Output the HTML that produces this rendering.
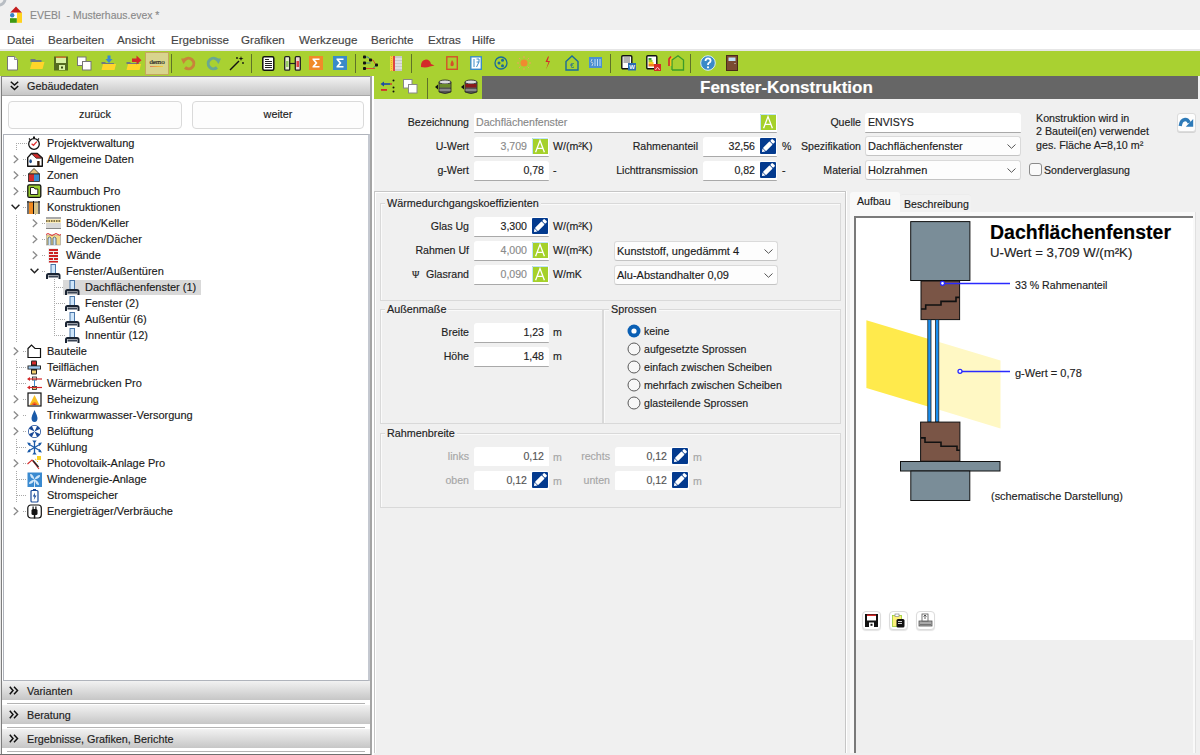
<!DOCTYPE html>
<html><head><meta charset="utf-8">
<style>
*{box-sizing:border-box;margin:0;padding:0}
html,body{width:1200px;height:755px;overflow:hidden;background:#f0f0f0;font-family:"Liberation Sans",sans-serif;font-size:11px;color:#1a1a1a}
div{-webkit-text-stroke:0.15px currentColor}
.a{position:absolute}
svg{position:absolute;overflow:visible}
#titlebar{left:0;top:0;width:1200px;height:30px;background:#f0f0f0}
#menubar{left:0;top:30px;width:1200px;height:19px;background:#fff}
#menusep{left:0;top:49px;width:1200px;height:2px;background:#e6e6e6}
#toolbar{left:0;top:51px;width:1200px;height:25px;background:#a9d131}
.menu{position:absolute;top:33px;font-size:11.6px;color:#444;letter-spacing:0}
.tsep{position:absolute;top:55px;width:1px;height:18px;background:#6b7d2a}
#left{left:0;top:76px;width:372px;height:679px;background:#fff}
.hdr{position:absolute;left:2px;width:368px;background:linear-gradient(#f2f2f2,#dcdcdc 50%,#c6c6c6)}
.btn{position:absolute;height:28px;border:1.3px solid #dadada;border-radius:4px;background:#fdfdfd;text-align:center;line-height:24px;font-size:10.8px;color:#222}
.tr{position:absolute;font-size:11px;color:#1a1a1a;white-space:nowrap}
.lbl{position:absolute;font-size:10.6px;color:#222;white-space:nowrap;text-align:right}
.inp{position:absolute;height:20px;background:#fff;border-bottom:2px solid #a8a8a8;border-radius:2px 2px 0 0}
.val{position:absolute;font-size:10.6px;white-space:nowrap}
</style></head><body>
<div id="titlebar" class="a"></div>
<div id="menubar" class="a"></div>
<div id="menusep" class="a"></div>
<div id="toolbar" class="a"></div>

<!-- title -->
<svg style="left:10px;top:6px" width="12" height="17" viewBox="0 0 12 17">
<polygon points="6,0.4 12,6.7 0,6.7" fill="#c41e1e"/>
<rect x="0" y="6.7" width="6.8" height="5.5" fill="#fff"/>
<circle cx="2.2" cy="9.3" r="2.2" fill="#3a82c4"/>
<rect x="0" y="12.2" width="6.8" height="4.6" fill="#3f9a12"/>
<rect x="7" y="6.7" width="5" height="10.1" fill="#ffd21e"/>
</svg>
<svg style="left:0;top:0" width="8" height="8"><circle cx="-1" cy="-1" r="6" fill="none" stroke="#9aa2aa" stroke-width="3" opacity="0.65"/></svg>
<div class="a" style="left:29.5px;top:8px;font-size:11.8px;color:#8a8a8a;transform:scaleX(0.885);transform-origin:0 0;white-space:nowrap">EVEBI&nbsp; - Musterhaus.evex *</div>

<!-- menu -->
<div class="menu" style="left:7px">Datei</div>
<div class="menu" style="left:48px">Bearbeiten</div>
<div class="menu" style="left:117px">Ansicht</div>
<div class="menu" style="left:171px">Ergebnisse</div>
<div class="menu" style="left:241px">Grafiken</div>
<div class="menu" style="left:299px">Werkzeuge</div>
<div class="menu" style="left:371px">Berichte</div>
<div class="menu" style="left:428px">Extras</div>
<div class="menu" style="left:472px">Hilfe</div>

<!-- LEFT PANEL -->
<div id="left" class="a"></div>
<div class="a" style="left:0;top:76px;width:1px;height:679px;background:#e6e6e6"></div><div class="a" style="left:1px;top:76px;width:1px;height:679px;background:#7e7e7e"></div>
<div class="a" style="left:370px;top:76px;width:2px;height:679px;background:#a4a4a4"></div>
<div class="hdr" style="top:76px;height:20px;border-top:1px solid #8a8a8a;border-bottom:1px solid #a8a8a8"></div>
<svg style="left:10px;top:81px" width="9" height="10"><polyline points="0.8,0.8 4.5,4 8.2,0.8" fill="none" stroke="#111" stroke-width="1.5"/><polyline points="0.8,5 4.5,8.5 8.2,5" fill="none" stroke="#111" stroke-width="1.5"/></svg>
<div class="tr" style="left:27px;top:80px;font-size:10.8px;color:#222">Gebäudedaten</div>
<div class="btn" style="left:8px;top:101px;width:174px">zurück</div>
<div class="btn" style="left:192px;top:101px;width:172px">weiter</div>
<div class="a" style="left:3px;top:134px;width:367px;height:547px;border:1px solid #b0b4bc;border-right:2px solid #c4c8d0;background:#fff"></div>

<div class="hdr" style="top:681px;height:19px"></div>
<div class="a" style="left:7px;top:703px;width:358px;height:1px;background:#b4b4b4"></div>
<div class="hdr" style="top:705px;height:19px"></div>
<div class="a" style="left:7px;top:727px;width:358px;height:1px;background:#b4b4b4"></div>
<div class="hdr" style="top:729px;height:19px"></div>
<div class="a" style="left:7px;top:751px;width:358px;height:1px;background:#b4b4b4"></div>
<div class="tr" style="left:27px;top:685px;font-size:10.8px;color:#222">Varianten</div>
<div class="tr" style="left:27px;top:709px;font-size:10.8px;color:#222">Beratung</div>
<div class="tr" style="left:27px;top:733px;font-size:10.8px;color:#222">Ergebnisse, Grafiken, Berichte</div>

<svg style="left:9px;top:686px" width="10" height="9"><polyline points="0.8,0.8 4,4.5 0.8,8.2" fill="none" stroke="#111" stroke-width="1.5"/><polyline points="5,0.8 8.5,4.5 5,8.2" fill="none" stroke="#111" stroke-width="1.5"/></svg>
<svg style="left:9px;top:710px" width="10" height="9"><polyline points="0.8,0.8 4,4.5 0.8,8.2" fill="none" stroke="#111" stroke-width="1.5"/><polyline points="5,0.8 8.5,4.5 5,8.2" fill="none" stroke="#111" stroke-width="1.5"/></svg>
<svg style="left:9px;top:734px" width="10" height="9"><polyline points="0.8,0.8 4,4.5 0.8,8.2" fill="none" stroke="#111" stroke-width="1.5"/><polyline points="5,0.8 8.5,4.5 5,8.2" fill="none" stroke="#111" stroke-width="1.5"/></svg>
<svg style="left:0;top:0" width="120" height="520"><g stroke="#a8a8a8" stroke-width="1" stroke-dasharray="1,1"><line x1="16.5" y1="143" x2="16.5" y2="511"/><line x1="16" y1="143.5" x2="27" y2="143.5"/><line x1="23" y1="159.5" x2="27" y2="159.5"/><line x1="23" y1="175.5" x2="27" y2="175.5"/><line x1="23" y1="191.5" x2="27" y2="191.5"/><line x1="23" y1="207.5" x2="27" y2="207.5"/><line x1="23" y1="351.5" x2="27" y2="351.5"/><line x1="17" y1="367.5" x2="27" y2="367.5"/><line x1="17" y1="383.5" x2="27" y2="383.5"/><line x1="23" y1="399.5" x2="27" y2="399.5"/><line x1="23" y1="415.5" x2="27" y2="415.5"/><line x1="23" y1="431.5" x2="27" y2="431.5"/><line x1="17" y1="447.5" x2="27" y2="447.5"/><line x1="23" y1="463.5" x2="27" y2="463.5"/><line x1="17" y1="479.5" x2="27" y2="479.5"/><line x1="17" y1="495.5" x2="27" y2="495.5"/><line x1="23" y1="511.5" x2="27" y2="511.5"/><line x1="35.5" y1="214" x2="35.5" y2="271"/><line x1="42" y1="223.5" x2="46" y2="223.5"/><line x1="42" y1="239.5" x2="46" y2="239.5"/><line x1="42" y1="255.5" x2="46" y2="255.5"/><line x1="42" y1="271.5" x2="46" y2="271.5"/><line x1="54.5" y1="279" x2="54.5" y2="335"/><line x1="54" y1="287.5" x2="65" y2="287.5"/><line x1="54" y1="303.5" x2="65" y2="303.5"/><line x1="54" y1="319.5" x2="65" y2="319.5"/><line x1="54" y1="335.5" x2="65" y2="335.5"/></g></svg>
<div class="a" style="left:63px;top:280px;width:138px;height:15px;background:#d9d9d9"></div>
<svg style="left:27px;top:136px" width="15" height="15" viewBox="0 0 15 15"><circle cx="7" cy="8" r="5.3" fill="#fff" stroke="#111" stroke-width="1.3"/><rect x="6" y="0.5" width="2" height="2" fill="#111"/><line x1="2" y1="2.5" x2="3.2" y2="3.7" stroke="#111" stroke-width="1.2"/><line x1="12" y1="2.5" x2="10.8" y2="3.7" stroke="#111" stroke-width="1.2"/><polyline points="4.6,7.8 6.5,9.3 9.8,5.6" fill="none" stroke="#e03030" stroke-width="1.3"/></svg>
<div class="tr" style="left:47px;top:137px">Projektverwaltung</div>
<div class="a" style="left:10px;top:151px;width:12px;height:16px;background:#fff"></div>
<svg style="left:13px;top:155px" width="7" height="9"><polyline points="0.8,0.6 4.8,4.3 0.8,8" fill="none" stroke="#8a8a8a" stroke-width="1.3"/></svg>
<svg style="left:27px;top:152px" width="15" height="15" viewBox="0 0 15 15"><path d="M0.7,14.2 V5.6 L4.4,1.5 H10.3 L15.3,6 V14.2 Z" fill="#fff" stroke="#111" stroke-width="1.4" stroke-linejoin="round"/><polygon points="4.6,1.8 10.2,1.8 14.6,6.2 9.2,6.2" fill="#d42a2a" stroke="#222" stroke-width="0.8"/><ellipse cx="3.6" cy="9.2" rx="1.3" ry="2" fill="#1a4a88"/><rect x="10.2" y="9" width="2.4" height="5" fill="#3a2010"/></svg>
<div class="tr" style="left:47px;top:153px">Allgemeine Daten</div>
<div class="a" style="left:10px;top:167px;width:12px;height:16px;background:#fff"></div>
<svg style="left:13px;top:171px" width="7" height="9"><polyline points="0.8,0.6 4.8,4.3 0.8,8" fill="none" stroke="#8a8a8a" stroke-width="1.3"/></svg>
<svg style="left:27px;top:168px" width="15" height="15" viewBox="0 0 15 15"><polygon points="1.5,6 7,0.5 12.5,6" fill="#e8c27a" stroke="#222" stroke-width="0.8"/><rect x="1.5" y="6" width="5.5" height="7.5" fill="#d42a2a"/><rect x="7" y="6" width="5.5" height="7.5" fill="#3a8ad0"/><rect x="1.5" y="6" width="11" height="7.5" fill="none" stroke="#222" stroke-width="0.8"/></svg>
<div class="tr" style="left:47px;top:169px">Zonen</div>
<div class="a" style="left:10px;top:183px;width:12px;height:16px;background:#fff"></div>
<svg style="left:13px;top:187px" width="7" height="9"><polyline points="0.8,0.6 4.8,4.3 0.8,8" fill="none" stroke="#8a8a8a" stroke-width="1.3"/></svg>
<svg style="left:27px;top:184px" width="15" height="15" viewBox="0 0 15 15"><rect x="0.8" y="0.8" width="13" height="12.6" rx="1.5" fill="#9acd32" stroke="#111" stroke-width="1.3"/><polygon points="3.5,3.5 7,3.5 8,5 10.8,5 10.8,10.5 3.5,10.5" fill="#fff" stroke="#111" stroke-width="0.9"/></svg>
<div class="tr" style="left:47px;top:185px">Raumbuch Pro</div>
<div class="a" style="left:10px;top:199px;width:12px;height:16px;background:#fff"></div>
<svg style="left:11px;top:204px" width="10" height="7"><polyline points="0.6,0.8 4.5,4.8 8.4,0.8" fill="none" stroke="#222" stroke-width="1.5"/></svg>
<svg style="left:27px;top:200px" width="15" height="15" viewBox="0 0 15 15"><rect x="1" y="1" width="12" height="13" fill="#fff"/><rect x="2" y="2" width="4" height="12" fill="#f08a20"/><rect x="7" y="2" width="4" height="12" fill="#d8c48a"/><line x1="1" y1="1" x2="1" y2="14" stroke="#111" stroke-width="1.2"/><line x1="6.5" y1="1" x2="6.5" y2="14" stroke="#111" stroke-width="1"/><line x1="12" y1="1" x2="12" y2="14" stroke="#111" stroke-width="1.2"/><line x1="0" y1="2" x2="13" y2="2" stroke="#111" stroke-width="0.8"/></svg>
<div class="tr" style="left:47px;top:201px">Konstruktionen</div>
<div class="a" style="left:29px;top:215px;width:12px;height:16px;background:#fff"></div>
<svg style="left:32px;top:219px" width="7" height="9"><polyline points="0.8,0.6 4.8,4.3 0.8,8" fill="none" stroke="#8a8a8a" stroke-width="1.3"/></svg>
<svg style="left:46px;top:216px" width="15" height="15" viewBox="0 0 15 15"><rect x="0" y="1" width="15" height="2" fill="#aaa"/><rect x="0" y="3.5" width="15" height="3" fill="#f2d98a"/><line x1="0" y1="5" x2="15" y2="5" stroke="#111" stroke-width="1.2" stroke-dasharray="1.5,1"/><rect x="0" y="7" width="15" height="5" fill="#d8d8d8"/><line x1="0" y1="12.5" x2="15" y2="12.5" stroke="#888" stroke-width="1"/></svg>
<div class="tr" style="left:66px;top:217px">Böden/Keller</div>
<div class="a" style="left:29px;top:231px;width:12px;height:16px;background:#fff"></div>
<svg style="left:32px;top:235px" width="7" height="9"><polyline points="0.8,0.6 4.8,4.3 0.8,8" fill="none" stroke="#8a8a8a" stroke-width="1.3"/></svg>
<svg style="left:46px;top:232px" width="15" height="15" viewBox="0 0 15 15"><rect x="0.5" y="3" width="14" height="10" fill="#f2d98a" stroke="#999" stroke-width="0.6"/><path d="M0,2.5 q2,-2 4,0 q2,2 4,0 q2,-2 4,0 q1.5,1.5 3,0" fill="none" stroke="#e03030" stroke-width="1"/><path d="M2,13 V6 q1.5,-2 3,0 V13 M7,13 V6 q1.5,-2 3,0 V13" fill="#cde4f4" stroke="#456" stroke-width="0.8"/></svg>
<div class="tr" style="left:66px;top:233px">Decken/Dächer</div>
<div class="a" style="left:29px;top:247px;width:12px;height:16px;background:#fff"></div>
<svg style="left:32px;top:251px" width="7" height="9"><polyline points="0.8,0.6 4.8,4.3 0.8,8" fill="none" stroke="#8a8a8a" stroke-width="1.3"/></svg>
<svg style="left:46px;top:248px" width="15" height="15" viewBox="0 0 15 15"><rect x="2" y="0" width="10" height="15" fill="#eee"/><rect x="3" y="1" width="9" height="2" fill="#cc2020"/><rect x="3" y="4" width="4" height="2" fill="#cc2020"/><rect x="8" y="4" width="4" height="2" fill="#cc2020"/><rect x="3" y="7" width="9" height="2" fill="#cc2020"/><rect x="3" y="10" width="4" height="2" fill="#cc2020"/><rect x="8" y="10" width="4" height="2" fill="#cc2020"/><rect x="3" y="13" width="9" height="1.5" fill="#cc2020"/></svg>
<div class="tr" style="left:66px;top:249px">Wände</div>
<div class="a" style="left:29px;top:263px;width:12px;height:16px;background:#fff"></div>
<svg style="left:30px;top:268px" width="10" height="7"><polyline points="0.6,0.8 4.5,4.8 8.4,0.8" fill="none" stroke="#222" stroke-width="1.5"/></svg>
<svg style="left:46px;top:264px" width="15" height="15" viewBox="0 0 15 15"><rect x="5" y="0.5" width="4.5" height="10" fill="#cfe6fa" stroke="#3a6aa0" stroke-width="0.9"/><path d="M1,15 V11.5 Q1,10 2.5,10 H12 Q13.5,10 13.5,11.5 V15" fill="none" stroke="#1a2433" stroke-width="2"/><rect x="2.5" y="11.5" width="9.5" height="2" fill="#3a4455"/></svg>
<div class="tr" style="left:66px;top:265px">Fenster/Außentüren</div>
<svg style="left:65px;top:280px" width="15" height="15" viewBox="0 0 15 15"><rect x="5" y="0.5" width="4.5" height="10" fill="#cfe6fa" stroke="#3a6aa0" stroke-width="0.9"/><path d="M1,15 V11.5 Q1,10 2.5,10 H12 Q13.5,10 13.5,11.5 V15" fill="none" stroke="#1a2433" stroke-width="2"/><rect x="2.5" y="11.5" width="9.5" height="2" fill="#3a4455"/></svg>
<div class="tr" style="left:85px;top:281px">Dachflächenfenster (1)</div>
<svg style="left:65px;top:296px" width="15" height="15" viewBox="0 0 15 15"><rect x="5" y="0.5" width="4.5" height="10" fill="#cfe6fa" stroke="#3a6aa0" stroke-width="0.9"/><path d="M1,15 V11.5 Q1,10 2.5,10 H12 Q13.5,10 13.5,11.5 V15" fill="none" stroke="#1a2433" stroke-width="2"/><rect x="2.5" y="11.5" width="9.5" height="2" fill="#3a4455"/></svg>
<div class="tr" style="left:85px;top:297px">Fenster (2)</div>
<svg style="left:65px;top:312px" width="15" height="15" viewBox="0 0 15 15"><rect x="5" y="0.5" width="4.5" height="10" fill="#cfe6fa" stroke="#3a6aa0" stroke-width="0.9"/><path d="M1,15 V11.5 Q1,10 2.5,10 H12 Q13.5,10 13.5,11.5 V15" fill="none" stroke="#1a2433" stroke-width="2"/><rect x="2.5" y="11.5" width="9.5" height="2" fill="#3a4455"/></svg>
<div class="tr" style="left:85px;top:313px">Außentür (6)</div>
<svg style="left:65px;top:328px" width="15" height="15" viewBox="0 0 15 15"><rect x="5" y="0.5" width="4.5" height="10" fill="#cfe6fa" stroke="#3a6aa0" stroke-width="0.9"/><path d="M1,15 V11.5 Q1,10 2.5,10 H12 Q13.5,10 13.5,11.5 V15" fill="none" stroke="#1a2433" stroke-width="2"/><rect x="2.5" y="11.5" width="9.5" height="2" fill="#3a4455"/></svg>
<div class="tr" style="left:85px;top:329px">Innentür (12)</div>
<div class="a" style="left:10px;top:343px;width:12px;height:16px;background:#fff"></div>
<svg style="left:13px;top:347px" width="7" height="9"><polyline points="0.8,0.6 4.8,4.3 0.8,8" fill="none" stroke="#8a8a8a" stroke-width="1.3"/></svg>
<svg style="left:27px;top:344px" width="15" height="15" viewBox="0 0 15 15"><polygon points="1,4.5 4.5,1 8,4.5 13.5,4.5 13.5,13.5 1,13.5" fill="#fff" stroke="#111" stroke-width="1.2"/></svg>
<div class="tr" style="left:47px;top:345px">Bauteile</div>
<svg style="left:27px;top:360px" width="15" height="15" viewBox="0 0 15 15"><rect x="4" y="0.5" width="6" height="14" rx="1" fill="#222"/><rect x="5" y="1.5" width="4" height="3" fill="#d42a2a"/><rect x="0.5" y="5.5" width="13.5" height="4" fill="#222"/><rect x="1.5" y="6.3" width="11.5" height="2.4" fill="#9ac8f0"/><rect x="5" y="10.5" width="4" height="3" fill="#f2d070"/></svg>
<div class="tr" style="left:47px;top:361px">Teilflächen</div>
<svg style="left:27px;top:376px" width="15" height="15" viewBox="0 0 15 15"><rect x="5.5" y="1" width="4" height="3" fill="#eee" stroke="#222" stroke-width="0.8"/><rect x="5.5" y="10.5" width="4" height="3" fill="#f2d070" stroke="#222" stroke-width="0.8"/><line x1="7.5" y1="4" x2="7.5" y2="10.5" stroke="#3a8ad0" stroke-width="1"/><line x1="1" y1="3" x2="15" y2="3" stroke="#d42a2a" stroke-width="1.2"/><polygon points="0,3 3,1 3,5" fill="#d42a2a"/><line x1="1" y1="11.5" x2="15" y2="11.5" stroke="#d42a2a" stroke-width="1.2"/><polygon points="0,11.5 3,9.5 3,13.5" fill="#d42a2a"/></svg>
<div class="tr" style="left:47px;top:377px">Wärmebrücken Pro</div>
<div class="a" style="left:10px;top:391px;width:12px;height:16px;background:#fff"></div>
<svg style="left:13px;top:395px" width="7" height="9"><polyline points="0.8,0.6 4.8,4.3 0.8,8" fill="none" stroke="#8a8a8a" stroke-width="1.3"/></svg>
<svg style="left:27px;top:392px" width="15" height="15" viewBox="0 0 15 15"><rect x="1" y="1" width="13" height="13" fill="#fff" stroke="#111" stroke-width="1.2"/><polygon points="7.5,3 12.5,13 2.5,13" fill="#f8c020"/><path d="M4,13 Q7.5,7 11,13 Z" fill="#f07020"/><path d="M6,13 Q7.5,10.5 9,13 Z" fill="#d42020"/></svg>
<div class="tr" style="left:47px;top:393px">Beheizung</div>
<div class="a" style="left:10px;top:407px;width:12px;height:16px;background:#fff"></div>
<svg style="left:13px;top:411px" width="7" height="9"><polyline points="0.8,0.6 4.8,4.3 0.8,8" fill="none" stroke="#8a8a8a" stroke-width="1.3"/></svg>
<svg style="left:27px;top:408px" width="15" height="15" viewBox="0 0 15 15"><path d="M7.5,2 Q5,7 4.5,10 Q4.5,14 7.5,14 Q10.5,14 10.5,10 Q10,7 7.5,2 Z" fill="#1a5aa8"/></svg>
<div class="tr" style="left:47px;top:409px">Trinkwarmwasser-Versorgung</div>
<div class="a" style="left:10px;top:423px;width:12px;height:16px;background:#fff"></div>
<svg style="left:13px;top:427px" width="7" height="9"><polyline points="0.8,0.6 4.8,4.3 0.8,8" fill="none" stroke="#8a8a8a" stroke-width="1.3"/></svg>
<svg style="left:27px;top:424px" width="15" height="15" viewBox="0 0 15 15"><circle cx="7.5" cy="7.5" r="6.5" fill="#1a4a98"/><path d="M7.5,7.5 L5,2.2 Q7.5,1.5 10,2.2 Z M7.5,7.5 L12.8,5 Q13.5,7.5 12.8,10 Z M7.5,7.5 L10,12.8 Q7.5,13.5 5,12.8 Z M7.5,7.5 L2.2,10 Q1.5,7.5 2.2,5 Z" fill="#fff"/></svg>
<div class="tr" style="left:47px;top:425px">Belüftung</div>
<svg style="left:27px;top:440px" width="15" height="15" viewBox="0 0 15 15"><g stroke="#1a5aa8" stroke-width="1.3"><line x1="7.5" y1="1" x2="7.5" y2="14"/><line x1="1.5" y1="4" x2="13.5" y2="11"/><line x1="1.5" y1="11" x2="13.5" y2="4"/></g><g fill="#1a5aa8"><polygon points="5.3,0.5 9.7,0.5 7.5,3.3"/><polygon points="5.3,14.5 9.7,14.5 7.5,11.7"/><polygon points="0,2.5 2.5,6.3 3.6,3"/><polygon points="15,2.5 12.5,6.3 11.4,3"/><polygon points="0,12.5 2.5,8.7 3.6,12"/><polygon points="15,12.5 12.5,8.7 11.4,12"/></g></svg>
<div class="tr" style="left:47px;top:441px">Kühlung</div>
<div class="a" style="left:10px;top:455px;width:12px;height:16px;background:#fff"></div>
<svg style="left:13px;top:459px" width="7" height="9"><polyline points="0.8,0.6 4.8,4.3 0.8,8" fill="none" stroke="#8a8a8a" stroke-width="1.3"/></svg>
<svg style="left:27px;top:456px" width="15" height="15" viewBox="0 0 15 15"><polyline points="0.5,8 5,4 12,13" fill="none" stroke="#d42a2a" stroke-width="1.1"/><line x1="6" y1="4.5" x2="11.5" y2="11" stroke="#222" stroke-width="1.3"/><rect x="10" y="0" width="4" height="4" fill="#f8d020"/><line x1="8" y1="3" x2="9.5" y2="4" stroke="#f8d020" stroke-width="1"/><line x1="10" y1="6" x2="11" y2="5" stroke="#f8d020" stroke-width="1"/></svg>
<div class="tr" style="left:47px;top:457px">Photovoltaik-Anlage Pro</div>
<svg style="left:27px;top:472px" width="15" height="15" viewBox="0 0 15 15"><rect x="0.5" y="0.5" width="14.5" height="14.5" fill="#3a8ad0"/><g fill="#cfe6fa"><path d="M7.5,7.5 Q3,6 3,2 Q6,1.5 7.5,7.5 Z"/><path d="M7.5,7.5 Q9,3 13,3 Q13.5,6 7.5,7.5 Z"/><path d="M7.5,7.5 Q12,9 12,13 Q9,13.5 7.5,7.5 Z"/><path d="M7.5,7.5 Q6,12 2,12 Q1.5,9 7.5,7.5 Z"/></g><g stroke="#fff" stroke-width="0.8"><line x1="7.5" y1="7.5" x2="7.5" y2="15"/></g></svg>
<div class="tr" style="left:47px;top:473px">Windenergie-Anlage</div>
<svg style="left:27px;top:488px" width="15" height="15" viewBox="0 0 15 15"><rect x="4" y="2.5" width="7" height="11.5" rx="1" fill="#fff" stroke="#1a4a98" stroke-width="1.2"/><rect x="6" y="1" width="3" height="1.5" fill="#1a4a98"/><polygon points="8,4.5 5.8,8.5 7.5,8.5 6.8,12 9.5,7.5 7.8,7.5" fill="#1a4a98"/></svg>
<div class="tr" style="left:47px;top:489px">Stromspeicher</div>
<div class="a" style="left:10px;top:503px;width:12px;height:16px;background:#fff"></div>
<svg style="left:13px;top:507px" width="7" height="9"><polyline points="0.8,0.6 4.8,4.3 0.8,8" fill="none" stroke="#8a8a8a" stroke-width="1.3"/></svg>
<svg style="left:27px;top:504px" width="15" height="15" viewBox="0 0 15 15"><rect x="0.8" y="1" width="13.5" height="13" rx="3" fill="#fff" stroke="#111" stroke-width="1.2"/><rect x="4.5" y="5" width="6" height="6" rx="1.5" fill="#111"/><rect x="5.5" y="2.5" width="1.2" height="3" fill="#111"/><rect x="8.3" y="2.5" width="1.2" height="3" fill="#111"/><rect x="6.8" y="11" width="1.5" height="3.5" fill="#111"/></svg>
<div class="tr" style="left:47px;top:505px">Energieträger/Verbräuche</div>
<div class="a" style="left:0;top:754px;width:371px;height:1px;background:#707070"></div>
<!-- CENTER -->
<div class="a" style="left:372px;top:76px;width:2px;height:679px;background:#fff"></div>

<div class="a" style="left:374px;top:76px;width:108px;height:23px;background:#a9d131"></div>
<div class="a" style="left:482px;top:76px;width:716px;height:23px;background:#666"></div>
<div class="a" style="left:700px;top:78px;font-size:17px;font-weight:bold;color:#fff">Fenster-Konstruktion</div>

<svg style="left:7px;top:55px" width="12" height="16" viewBox="0 0 12 16"><path d="M0.5,1.5 H7.5 L10.5,4.5 V15 H0.5 Z" fill="#fff" stroke="#777" stroke-width="1"/><path d="M7.5,1.5 V4.5 H10.5" fill="#ddd" stroke="#777" stroke-width="0.8"/></svg>
<svg style="left:30px;top:55px" width="15" height="16" viewBox="0 0 15 16"><path d="M0.5,4 H5 L6,5 H11.5 V7 H0.5 Z" fill="#6f7a80"/><polygon points="2,7 14.5,7 12.5,14 0,14" fill="#ffd52a"/></svg>
<svg style="left:54px;top:55px" width="15" height="16" viewBox="0 0 15 16"><rect x="0" y="1.5" width="14" height="14" fill="#556b20"/><rect x="2" y="1.5" width="10" height="1.5" fill="#c87830"/><rect x="2" y="3" width="10" height="5" fill="#d8f0a0"/><rect x="5" y="10" width="6" height="5" fill="#d8f0a0"/><rect x="7" y="11.5" width="2" height="2" fill="#3a4a15"/></svg>
<svg style="left:77px;top:55px" width="15" height="16" viewBox="0 0 15 16"><rect x="0.5" y="2" width="8.5" height="8.5" fill="#fff" stroke="#777" stroke-width="1"/><rect x="5.5" y="6.5" width="8.5" height="8.5" fill="#fff" stroke="#777" stroke-width="1"/></svg>
<svg style="left:101px;top:55px" width="16" height="16" viewBox="0 0 16 16"><path d="M0.5,7 H4 L5,8 H13 V9 H0.5 Z" fill="#6f7a80"/><polygon points="2,9 15,9 13.5,15 0.5,15" fill="#ffd52a"/><rect x="6.5" y="0.5" width="3" height="4" fill="#3a8ad0"/><polygon points="4.5,4 11.5,4 8,8" fill="#3a8ad0"/></svg>
<svg style="left:126px;top:55px" width="16" height="16" viewBox="0 0 16 16"><path d="M0.5,7 H4 L5,8 H13 V9 H0.5 Z" fill="#6f7a80"/><polygon points="2,9 15,9 13.5,15 0.5,15" fill="#ffd52a"/><rect x="6" y="3.5" width="5" height="3.5" fill="#d42a2a"/><polygon points="10.5,0.5 15.5,5.2 10.5,9.5" fill="#d42a2a"/></svg>
<div class="a" style="left:145px;top:52px;width:24px;height:23px;background:#d8d48e;border:1px solid #c4a85a"></div>
<div class="a" style="left:145px;top:58px;width:24px;text-align:center;font-size:7px;line-height:9px;font-family:'Liberation Serif',serif;color:#222;letter-spacing:-0.1px">demo</div>
<div class="a" style="left:150px;top:66px;width:13px;height:1px;background:linear-gradient(90deg,#d44,#f80,#fc0);opacity:0.6"></div>
<div class="a" style="left:171px;top:54px;width:1px;height:19px;background:#5f7228"></div>
<svg style="left:181px;top:56px" width="16" height="15" viewBox="0 0 16 15"><path d="M3.5,4 A5.3,5.3 0 1 1 4,11.5" fill="none" stroke="#c8843a" stroke-width="3"/><polygon points="0,2.5 6.5,2.5 2.5,8" fill="#c8843a"/></svg>
<svg style="left:205px;top:56px" width="16" height="15" viewBox="0 0 16 15"><path d="M12.5,4 A5.3,5.3 0 1 0 12,11.5" fill="none" stroke="#6aa890" stroke-width="3"/><polygon points="16,2.5 9.5,2.5 13.5,8" fill="#6aa890"/></svg>
<svg style="left:229px;top:55px" width="16" height="16" viewBox="0 0 16 16"><line x1="1" y1="15" x2="10" y2="6" stroke="#111" stroke-width="1.4"/><path d="M12,1 L12.6,3 L14.5,3.5 L12.6,4.2 L12,6 L11.4,4.2 L9.5,3.5 L11.4,3 Z" fill="#111"/><circle cx="8" cy="3" r="0.9" fill="#111"/><circle cx="14" cy="8" r="0.9" fill="#111"/></svg>
<div class="a" style="left:251px;top:54px;width:1px;height:19px;background:#5f7228"></div>
<svg style="left:262px;top:56px" width="13" height="15" viewBox="0 0 13 15"><rect x="0.8" y="0.8" width="11" height="13.5" rx="1.5" fill="#fff" stroke="#111" stroke-width="1.5"/><g stroke="#222" stroke-width="1"><line x1="3" y1="3.5" x2="7" y2="3.5"/><line x1="3" y1="5.5" x2="10" y2="5.5"/><line x1="3" y1="7.5" x2="10" y2="7.5"/><line x1="3" y1="9.5" x2="10" y2="9.5"/><line x1="3" y1="11.5" x2="10" y2="11.5"/></g></svg>
<svg style="left:284px;top:56px" width="17" height="15" viewBox="0 0 17 15"><rect x="0.7" y="0.7" width="5" height="13.5" rx="1" fill="#e8f0d0" stroke="#222" stroke-width="1.3"/><rect x="11.3" y="0.7" width="5" height="13.5" rx="1" fill="#f0d8d8" stroke="#222" stroke-width="1.3"/><line x1="5.5" y1="7.5" x2="11.5" y2="7.5" stroke="#222" stroke-width="1.2"/><rect x="2" y="5" width="2.5" height="6" fill="#9c6"/><rect x="12.5" y="5" width="2.5" height="6" fill="#d44"/></svg>
<svg style="left:309px;top:56px" width="15" height="15" viewBox="0 0 15 15"><rect x="0" y="0" width="14" height="14" fill="#f08a2a"/><path d="M3.5,2.5 H10.5 V4 H6 L8.5,7 L6,10 H10.5 V11.5 H3.5 V10.3 L6.3,7 L3.5,3.7 Z" fill="#fff"/></svg>
<svg style="left:333px;top:56px" width="15" height="15" viewBox="0 0 15 15"><rect x="0" y="0" width="14" height="14" fill="#3a8ac8"/><path d="M3.5,2.5 H10.5 V4 H6 L8.5,7 L6,10 H10.5 V11.5 H3.5 V10.3 L6.3,7 L3.5,3.7 Z" fill="#fff"/></svg>
<div class="a" style="left:355px;top:54px;width:1px;height:19px;background:#5f7228"></div>
<svg style="left:363px;top:55px" width="18" height="16" viewBox="0 0 18 16"><path d="M1.5,2 H5 L7.5,5 M1.5,8 H7.5 M1.5,13.5 H10 L13,10" fill="none" stroke="#2a6ab0" stroke-width="0.8"/><path d="M7.5,5 H10 L13,10" fill="none" stroke="#d4502a" stroke-width="1"/><path d="M1.5,13.5 H12" fill="none" stroke="#d4502a" stroke-width="1"/><g fill="#111"><rect x="0" y="0.5" width="3" height="3" rx="0.8"/><rect x="0" y="6.5" width="3" height="3" rx="0.8"/><rect x="0" y="12" width="3" height="3" rx="0.8"/><rect x="6" y="3.5" width="3" height="3" rx="0.8"/><rect x="12" y="8.5" width="3" height="3" rx="0.8"/></g></svg>
<svg style="left:390px;top:56px" width="13" height="15" viewBox="0 0 13 15"><rect x="0" y="0" width="3" height="15" fill="#f8d040"/><rect x="3" y="0" width="2" height="15" fill="#d44"/><rect x="5" y="0" width="7" height="15" fill="#c8c8c8"/><g stroke="#fff" stroke-width="0.8"><line x1="5" y1="3" x2="12" y2="3"/><line x1="5" y1="6" x2="12" y2="6"/><line x1="5" y1="9" x2="12" y2="9"/><line x1="5" y1="12" x2="12" y2="12"/></g><line x1="1.5" y1="0" x2="1.5" y2="15" stroke="#e8a020" stroke-width="0.8" stroke-dasharray="1,1"/></svg>
<div class="a" style="left:411px;top:54px;width:1px;height:19px;background:#5f7228"></div>
<svg style="left:420px;top:58px" width="15" height="11" viewBox="0 0 15 11"><path d="M1,9 Q0.5,2 6,1.5 Q10,1.5 11,6 L14.5,7.5 L10,8.5 Q6,10 1,9 Z" fill="#d42a2a"/></svg>
<svg style="left:446px;top:56px" width="13" height="15" viewBox="0 0 13 15"><rect x="0.8" y="0.8" width="10.5" height="12.5" fill="none" stroke="#d4502a" stroke-width="1.4"/><path d="M6,4 Q8.5,7 7.5,9.5 Q6,11 4.5,9.5 Q4,7.5 6,4 Z" fill="#d4502a"/></svg>
<svg style="left:470px;top:56px" width="13" height="15" viewBox="0 0 13 15"><rect x="0.8" y="0.8" width="10.5" height="12.5" fill="#fff" stroke="#3a8ac8" stroke-width="1.4"/><line x1="4" y1="3" x2="4" y2="11" stroke="#3a8ac8" stroke-width="1"/><path d="M6.5,3 H9 V6 H6.5 M6.5,11 L9,6" fill="none" stroke="#3a8ac8" stroke-width="1"/></svg>
<svg style="left:494px;top:56px" width="14" height="14" viewBox="0 0 14 14"><circle cx="7" cy="7" r="6" fill="none" stroke="#1a6a9a" stroke-width="1.3"/><circle cx="5" cy="7" r="1.5" fill="#1a6a9a"/><circle cx="8.5" cy="4.3" r="1.5" fill="#1a6a9a"/><circle cx="8.5" cy="9.7" r="1.5" fill="#1a6a9a"/></svg>
<svg style="left:517px;top:56px" width="14" height="14" viewBox="0 0 14 14"><circle cx="7" cy="7" r="3.5" fill="#f08a30"/><g stroke="#f0a060" stroke-width="1"><line x1="7" y1="0" x2="7" y2="2"/><line x1="7" y1="12" x2="7" y2="14"/><line x1="0" y1="7" x2="2" y2="7"/><line x1="12" y1="7" x2="14" y2="7"/><line x1="2" y1="2" x2="3.3" y2="3.3"/><line x1="12" y1="2" x2="10.7" y2="3.3"/><line x1="2" y1="12" x2="3.3" y2="10.7"/><line x1="12" y1="12" x2="10.7" y2="10.7"/></g></svg>
<svg style="left:544px;top:56px" width="7" height="14" viewBox="0 0 7 14"><path d="M4,0.5 L1.5,6 H4.5 L2,13.5 L6,5 H3.5 L5,0.5 Z" fill="#d42a2a"/></svg>
<svg style="left:565px;top:55px" width="14" height="16" viewBox="0 0 14 16"><path d="M1,6.5 L7,1 L13,6.5 V15 H1 Z" fill="none" stroke="#1a6a9a" stroke-width="1.4"/><text x="7" y="13" font-size="7" text-anchor="middle" fill="#1a6a9a" font-family="Liberation Sans">€</text></svg>
<svg style="left:589px;top:57px" width="14" height="12" viewBox="0 0 14 12"><rect x="0" y="0" width="13" height="11" fill="#4a90d0"/><g stroke="#cfe6fa" stroke-width="0.9"><path d="M3,2 L2,5 L4,6 L3,9"/><line x1="6" y1="2" x2="6" y2="9"/><line x1="8.5" y1="2" x2="8.5" y2="9"/><line x1="11" y1="2" x2="11" y2="9"/></g></svg>
<div class="a" style="left:610px;top:54px;width:1px;height:19px;background:#5f7228"></div>
<svg style="left:621px;top:55px" width="15" height="16" viewBox="0 0 15 16"><rect x="0.8" y="0.8" width="10" height="13" rx="1" fill="#fff" stroke="#111" stroke-width="1.4"/><g stroke="#555" stroke-width="0.9"><line x1="2.5" y1="3" x2="9" y2="3"/><line x1="2.5" y1="5" x2="9" y2="5"/><line x1="2.5" y1="7" x2="9" y2="7"/></g><rect x="7" y="8" width="8" height="7.5" fill="#2a6ab0"/><text x="11" y="14" font-size="6" font-weight="bold" text-anchor="middle" fill="#fff" font-family="Liberation Sans">W</text></svg>
<svg style="left:646px;top:55px" width="15" height="16" viewBox="0 0 15 16"><rect x="0.8" y="0.8" width="10" height="13" rx="1" fill="#fff" stroke="#111" stroke-width="1.4"/><rect x="2.5" y="3" width="3" height="2" fill="#3a9a3a"/><rect x="2.5" y="5" width="4" height="2" fill="#9acd32"/><rect x="2.5" y="7" width="5" height="2" fill="#f8d020"/><rect x="2.5" y="9" width="6" height="2.5" fill="#f08020"/><rect x="8" y="9" width="7" height="7" fill="#d42a2a"/><path d="M9.5,15 Q11.5,10 13.5,15" fill="none" stroke="#fff" stroke-width="0.8"/></svg>
<svg style="left:668px;top:55px" width="16" height="16" viewBox="0 0 16 16"><path d="M4,15 V5 L10,0.8 L15.5,5 V15 H4" fill="none" stroke="#3a9a2a" stroke-width="1.3"/><path d="M2.5,11 V4 L4.5,2" fill="none" stroke="#f8c020" stroke-width="1.6"/><path d="M1,11 V4 L3,1.5" fill="none" stroke="#d42a2a" stroke-width="1.6"/></svg>
<div class="a" style="left:690px;top:54px;width:1px;height:19px;background:#5f7228"></div>
<svg style="left:700px;top:55px" width="16" height="16" viewBox="0 0 16 16"><circle cx="8" cy="8" r="7.3" fill="#3a8ac8" stroke="#d8ecf8" stroke-width="1"/><path d="M5.5,6 Q5.5,3.3 8,3.3 Q10.6,3.3 10.6,5.8 Q10.6,7.3 8.8,8 Q8,8.5 8,10" fill="none" stroke="#fff" stroke-width="1.8"/><circle cx="8" cy="12.3" r="1.1" fill="#fff"/></svg>
<svg style="left:726px;top:55px" width="12" height="16" viewBox="0 0 12 16"><rect x="0.5" y="0.5" width="11" height="15" fill="#7a4a32" stroke="#4a2a1a" stroke-width="1"/><rect x="2.5" y="2.5" width="7" height="3.5" fill="#bfe0f8"/><rect x="8.5" y="8" width="1" height="1" fill="#ddd"/></svg>
<svg style="left:380px;top:79px" width="15" height="15" viewBox="0 0 15 15"><line x1="2" y1="5" x2="10" y2="5" stroke="#1a4aa8" stroke-width="1.6"/><polygon points="0.5,5 4,2.5 4,7.5" fill="#1a4aa8"/><rect x="1" y="10" width="6" height="1.8" fill="#d42a2a"/><circle cx="11" cy="5" r="0.9" fill="#d42a2a"/><circle cx="13.5" cy="1.5" r="1" fill="#111"/><circle cx="13.5" cy="8.5" r="1" fill="#111"/><circle cx="13.5" cy="12.5" r="1" fill="#111"/></svg>
<svg style="left:403px;top:79px" width="15" height="15" viewBox="0 0 15 15"><rect x="0.5" y="0.5" width="8.5" height="8.5" fill="#fff" stroke="#888" stroke-width="1"/><rect x="5.5" y="5.5" width="8.5" height="8.5" fill="#fff" stroke="#888" stroke-width="1"/></svg>
<div class="a" style="left:427px;top:78px;width:1px;height:21px;background:#5f7228"></div>
<svg style="left:435px;top:79px" width="17" height="16" viewBox="0 0 17 16"><polygon points="0,8 3,5.5 3,10.5" fill="#111"/><path d="M4,3 Q10,0 16,3 V13 Q10,16 4,13 Z" fill="#555" stroke="#222" stroke-width="0.8"/><ellipse cx="10" cy="3" rx="6" ry="2" fill="#ddd" stroke="#222" stroke-width="0.8"/><rect x="4.5" y="5" width="11" height="3.5" fill="#6a8a2a"/><rect x="4.5" y="10" width="11" height="2" fill="#888"/></svg>
<svg style="left:461px;top:79px" width="17" height="16" viewBox="0 0 17 16"><polygon points="0,8 3,5.5 3,10.5" fill="#111"/><path d="M4,3 Q10,0 16,3 V13 Q10,16 4,13 Z" fill="#555" stroke="#222" stroke-width="0.8"/><ellipse cx="10" cy="3" rx="6" ry="2" fill="#ddd" stroke="#222" stroke-width="0.8"/><rect x="4.5" y="5" width="11" height="3.5" fill="#8a1a1a"/><rect x="4.5" y="10" width="11" height="2" fill="#888"/></svg>
<div class="a" style="right:731px;top:113px;line-height:19px;font-size:10.6px;color:#222;white-space:nowrap">Bezeichnung</div>
<div class="a" style="left:474px;top:113px;width:303px;height:19.5px;background:#fff;border-radius:3px 3px 1px 1px;border-bottom:1.5px solid #a9a9a9;"></div>
<svg style="left:760px;top:114px" width="16" height="16" viewBox="0 0 16 16"><rect width="16" height="16" fill="#a5d12a"/><path d="M0.5,16 V0.5 H16" fill="none" stroke="#bfe3fa" stroke-width="1"/><path d="M3.6,14.2 L8,2.6 L12.4,14.2 M5.1,10.3 H10.9" fill="none" stroke="#fff" stroke-width="1.3"/></svg>
<div class="a" style="left:476px;top:113px;line-height:19px;font-size:10.6px;color:#888;white-space:nowrap">Dachflächenfenster</div>
<div class="a" style="right:339px;top:113px;line-height:19px;font-size:10.6px;color:#222;white-space:nowrap">Quelle</div>
<div class="a" style="left:865px;top:113px;width:156px;height:19.5px;background:#fff;border-radius:3px 3px 1px 1px;border-bottom:1.5px solid #a9a9a9;"></div>
<div class="a" style="left:868px;top:113px;line-height:19px;font-size:10.6px;color:#222;white-space:nowrap">ENVISYS</div>
<div class="a" style="left:1036px;top:112px;line-height:13.4px;font-size:10.7px;color:#222;white-space:nowrap">Konstruktion wird in<br>2 Bauteil(en) verwendet<br>ges. Fläche A=8,10 m²</div>
<div class="a" style="left:1177px;top:113px;width:19px;height:19px;background:#fdfdfd;border:1px solid #dcdcdc;border-radius:3px;box-shadow:0 1px 0 #d4d4d4"></div>
<svg style="left:1177px;top:113px" width="19" height="19" viewBox="0 0 19 19"><path d="M3.2,13 Q4,6.8 8,6.5 Q10.8,6.3 12.3,9.8" fill="none" stroke="#2e7ab8" stroke-width="3.3"/><polygon points="16.2,6 16.2,13.8 8.8,13.8" fill="#2e7ab8"/></svg>
<div class="a" style="right:731px;top:137px;line-height:19px;font-size:10.6px;color:#222;white-space:nowrap">U-Wert</div>
<div class="a" style="left:474px;top:137px;width:75px;height:19.5px;background:#fff;border-radius:3px 3px 1px 1px;border-bottom:1.5px solid #a9a9a9;"></div>
<svg style="left:532px;top:138px" width="16" height="16" viewBox="0 0 16 16"><rect width="16" height="16" fill="#a5d12a"/><path d="M0.5,16 V0.5 H16" fill="none" stroke="#bfe3fa" stroke-width="1"/><path d="M3.6,14.2 L8,2.6 L12.4,14.2 M5.1,10.3 H10.9" fill="none" stroke="#fff" stroke-width="1.3"/></svg>
<div class="a" style="right:673px;top:137px;line-height:19px;font-size:10.6px;color:#8a8a8a;white-space:nowrap">3,709</div>
<div class="a" style="left:553px;top:137px;line-height:19px;font-size:10.6px;color:#222;white-space:nowrap;">W/(m²K)</div>
<div class="a" style="right:502px;top:137px;line-height:19px;font-size:10.6px;color:#222;white-space:nowrap">Rahmenanteil</div>
<div class="a" style="left:703px;top:137px;width:74px;height:19.5px;background:#fff;border-radius:3px 3px 1px 1px;border-bottom:1.5px solid #a9a9a9;"></div>
<svg style="left:760px;top:138px" width="16" height="16" viewBox="0 0 16 16"><rect width="16" height="16" rx="1" fill="#033a8e"/><g transform="rotate(-45 8 8)" fill="#fff"><polygon points="-0.5,8 2.3,5.9 2.3,10.1"/><rect x="3" y="5.8" width="9.3" height="4.4" rx="0.6"/><rect x="13.1" y="5.8" width="3" height="4.4" rx="1"/></g></svg>
<div class="a" style="right:445px;top:137px;line-height:19px;font-size:10.6px;color:#222;white-space:nowrap">32,56</div>
<div class="a" style="left:782px;top:137px;line-height:19px;font-size:10.6px;color:#222;white-space:nowrap;">%</div>
<div class="a" style="right:339px;top:137px;line-height:19px;font-size:10.6px;color:#222;white-space:nowrap">Spezifikation</div>
<div class="a" style="left:865px;top:136px;width:156px;height:20px;background:#fdfdfd;border:1px solid #dadada;border-bottom-color:#c4c4c4;border-radius:3px"></div>
<div class="a" style="left:868px;top:136px;line-height:20px;font-size:11px;color:#1a1a1a;white-space:nowrap">Dachflächenfenster</div>
<svg style="left:1007px;top:144px" width="9" height="5"><polyline points="0.5,0.5 4.5,4.3 8.5,0.5" fill="none" stroke="#555" stroke-width="1"/></svg>
<div class="a" style="right:731px;top:161px;line-height:19px;font-size:10.6px;color:#222;white-space:nowrap">g-Wert</div>
<div class="a" style="left:474px;top:161px;width:75px;height:19.5px;background:#fff;border-radius:3px 3px 1px 1px;border-bottom:1.5px solid #a9a9a9;"></div>
<div class="a" style="right:656px;top:161px;line-height:19px;font-size:10.6px;color:#222;white-space:nowrap">0,78</div>
<div class="a" style="left:553px;top:161px;line-height:19px;font-size:10.6px;color:#222;white-space:nowrap;">-</div>
<div class="a" style="right:502px;top:161px;line-height:19px;font-size:10.6px;color:#222;white-space:nowrap">Lichttransmission</div>
<div class="a" style="left:703px;top:161px;width:74px;height:19.5px;background:#fff;border-radius:3px 3px 1px 1px;border-bottom:1.5px solid #a9a9a9;"></div>
<svg style="left:760px;top:162px" width="16" height="16" viewBox="0 0 16 16"><rect width="16" height="16" rx="1" fill="#033a8e"/><g transform="rotate(-45 8 8)" fill="#fff"><polygon points="-0.5,8 2.3,5.9 2.3,10.1"/><rect x="3" y="5.8" width="9.3" height="4.4" rx="0.6"/><rect x="13.1" y="5.8" width="3" height="4.4" rx="1"/></g></svg>
<div class="a" style="right:445px;top:161px;line-height:19px;font-size:10.6px;color:#222;white-space:nowrap">0,82</div>
<div class="a" style="left:782px;top:161px;line-height:19px;font-size:10.6px;color:#222;white-space:nowrap;">-</div>
<div class="a" style="right:339px;top:161px;line-height:19px;font-size:10.6px;color:#222;white-space:nowrap">Material</div>
<div class="a" style="left:865px;top:160px;width:156px;height:20px;background:#fdfdfd;border:1px solid #dadada;border-bottom-color:#c4c4c4;border-radius:3px"></div>
<div class="a" style="left:868px;top:160px;line-height:20px;font-size:11px;color:#1a1a1a;white-space:nowrap">Holzrahmen</div>
<svg style="left:1007px;top:168px" width="9" height="5"><polyline points="0.5,0.5 4.5,4.3 8.5,0.5" fill="none" stroke="#555" stroke-width="1"/></svg>
<div class="a" style="left:1029px;top:163px;width:13px;height:13px;border:1px solid #8a8a8a;border-radius:3px;background:#fafafa"></div>
<div class="a" style="left:1044px;top:161px;line-height:19px;font-size:10.6px;color:#222;white-space:nowrap;">Sonderverglasung</div>
<div class="a" style="left:374px;top:191px;width:472px;height:562px;border:1px solid #c6c6c6;border-bottom:none;box-shadow:inset 1px 1px 0 #fff, 1px 0 0 #fff"></div>
<div class="a" style="left:380px;top:203px;width:461px;height:98px;border:1px solid #d9d9d9;box-shadow:inset 1px 1px 0 #fafafa"></div>
<div class="a" style="left:385px;top:197px;padding:0 2px;background:#f0f0f0;line-height:13px;font-size:10.8px;color:#222;white-space:nowrap">Wärmedurchgangskoeffizienten</div>
<div class="a" style="left:380px;top:309px;width:223px;height:115px;border:1px solid #d9d9d9;box-shadow:inset 1px 1px 0 #fafafa"></div>
<div class="a" style="left:385px;top:303px;padding:0 2px;background:#f0f0f0;line-height:13px;font-size:10.8px;color:#222;white-space:nowrap">Außenmaße</div>
<div class="a" style="left:603px;top:309px;width:238px;height:115px;border:1px solid #d9d9d9;box-shadow:inset 1px 1px 0 #fafafa"></div>
<div class="a" style="left:609px;top:303px;padding:0 2px;background:#f0f0f0;line-height:13px;font-size:10.8px;color:#222;white-space:nowrap">Sprossen</div>
<div class="a" style="left:380px;top:433px;width:461px;height:75px;border:1px solid #d9d9d9;box-shadow:inset 1px 1px 0 #fafafa"></div>
<div class="a" style="left:385px;top:427px;padding:0 2px;background:#f0f0f0;line-height:13px;font-size:10.8px;color:#222;white-space:nowrap">Rahmenbreite</div>
<div class="a" style="right:731px;top:217px;line-height:19px;font-size:10.6px;color:#222;white-space:nowrap">Glas Ug</div>
<div class="a" style="left:474px;top:217px;width:75px;height:19.5px;background:#fff;border-radius:3px 3px 1px 1px;border-bottom:1.5px solid #a9a9a9;"></div>
<svg style="left:532px;top:218px" width="16" height="16" viewBox="0 0 16 16"><rect width="16" height="16" rx="1" fill="#033a8e"/><g transform="rotate(-45 8 8)" fill="#fff"><polygon points="-0.5,8 2.3,5.9 2.3,10.1"/><rect x="3" y="5.8" width="9.3" height="4.4" rx="0.6"/><rect x="13.1" y="5.8" width="3" height="4.4" rx="1"/></g></svg>
<div class="a" style="right:673px;top:217px;line-height:19px;font-size:10.6px;color:#222;white-space:nowrap">3,300</div>
<div class="a" style="left:553px;top:217px;line-height:19px;font-size:10.6px;color:#222;white-space:nowrap;">W/(m²K)</div>
<div class="a" style="right:731px;top:241px;line-height:19px;font-size:10.6px;color:#222;white-space:nowrap">Rahmen Uf</div>
<div class="a" style="left:474px;top:241px;width:75px;height:19.5px;background:#fff;border-radius:3px 3px 1px 1px;border-bottom:1.5px solid #a9a9a9;"></div>
<svg style="left:532px;top:242px" width="16" height="16" viewBox="0 0 16 16"><rect width="16" height="16" fill="#a5d12a"/><path d="M0.5,16 V0.5 H16" fill="none" stroke="#bfe3fa" stroke-width="1"/><path d="M3.6,14.2 L8,2.6 L12.4,14.2 M5.1,10.3 H10.9" fill="none" stroke="#fff" stroke-width="1.3"/></svg>
<div class="a" style="right:673px;top:241px;line-height:19px;font-size:10.6px;color:#8a8a8a;white-space:nowrap">4,000</div>
<div class="a" style="left:553px;top:241px;line-height:19px;font-size:10.6px;color:#222;white-space:nowrap;">W/(m²K)</div>
<div class="a" style="left:614px;top:241px;width:164px;height:20px;background:#fdfdfd;border:1px solid #dadada;border-bottom-color:#c4c4c4;border-radius:3px"></div>
<div class="a" style="left:617px;top:241px;line-height:20px;font-size:11px;color:#1a1a1a;white-space:nowrap">Kunststoff, ungedämmt 4</div>
<svg style="left:764px;top:249px" width="9" height="5"><polyline points="0.5,0.5 4.5,4.3 8.5,0.5" fill="none" stroke="#555" stroke-width="1"/></svg>
<div class="a" style="right:731px;top:265px;line-height:19px;font-size:10.6px;color:#222;white-space:nowrap">Glasrand</div>
<div class="a" style="left:412px;top:265px;line-height:19px;font-size:10px;color:#222;font-family:'Liberation Serif',serif">Ψ</div>
<div class="a" style="left:474px;top:265px;width:75px;height:19.5px;background:#fff;border-radius:3px 3px 1px 1px;border-bottom:1.5px solid #a9a9a9;"></div>
<svg style="left:532px;top:266px" width="16" height="16" viewBox="0 0 16 16"><rect width="16" height="16" fill="#a5d12a"/><path d="M0.5,16 V0.5 H16" fill="none" stroke="#bfe3fa" stroke-width="1"/><path d="M3.6,14.2 L8,2.6 L12.4,14.2 M5.1,10.3 H10.9" fill="none" stroke="#fff" stroke-width="1.3"/></svg>
<div class="a" style="right:673px;top:265px;line-height:19px;font-size:10.6px;color:#8a8a8a;white-space:nowrap">0,090</div>
<div class="a" style="left:553px;top:265px;line-height:19px;font-size:10.6px;color:#222;white-space:nowrap;">W/mK</div>
<div class="a" style="left:614px;top:265px;width:164px;height:20px;background:#fdfdfd;border:1px solid #dadada;border-bottom-color:#c4c4c4;border-radius:3px"></div>
<div class="a" style="left:617px;top:265px;line-height:20px;font-size:11px;color:#1a1a1a;white-space:nowrap">Alu-Abstandhalter 0,09</div>
<svg style="left:764px;top:273px" width="9" height="5"><polyline points="0.5,0.5 4.5,4.3 8.5,0.5" fill="none" stroke="#555" stroke-width="1"/></svg>
<div class="a" style="right:731px;top:323px;line-height:19px;font-size:10.6px;color:#222;white-space:nowrap">Breite</div>
<div class="a" style="left:474px;top:323px;width:75px;height:19.5px;background:#fff;border-radius:3px 3px 1px 1px;border-bottom:1.5px solid #a9a9a9;"></div>
<div class="a" style="right:656px;top:323px;line-height:19px;font-size:10.6px;color:#222;white-space:nowrap">1,23</div>
<div class="a" style="left:553px;top:323px;line-height:19px;font-size:10.6px;color:#222;white-space:nowrap;">m</div>
<div class="a" style="right:731px;top:347px;line-height:19px;font-size:10.6px;color:#222;white-space:nowrap">Höhe</div>
<div class="a" style="left:474px;top:347px;width:75px;height:19.5px;background:#fff;border-radius:3px 3px 1px 1px;border-bottom:1.5px solid #a9a9a9;"></div>
<div class="a" style="right:656px;top:347px;line-height:19px;font-size:10.6px;color:#222;white-space:nowrap">1,48</div>
<div class="a" style="left:553px;top:347px;line-height:19px;font-size:10.6px;color:#222;white-space:nowrap;">m</div>
<svg style="left:627px;top:324px" width="14" height="14"><circle cx="7" cy="7" r="6.5" fill="#0a5fb4"/><circle cx="7" cy="7" r="2.6" fill="#fff"/></svg>
<div class="a" style="left:644px;top:322px;line-height:19px;font-size:10.6px;color:#222;white-space:nowrap;">keine</div>
<svg style="left:627px;top:342px" width="14" height="14"><circle cx="7" cy="7" r="6" fill="#f7f7f7" stroke="#5a5a5a" stroke-width="1"/></svg>
<div class="a" style="left:644px;top:340px;line-height:19px;font-size:10.6px;color:#222;white-space:nowrap;">aufgesetzte Sprossen</div>
<svg style="left:627px;top:360px" width="14" height="14"><circle cx="7" cy="7" r="6" fill="#f7f7f7" stroke="#5a5a5a" stroke-width="1"/></svg>
<div class="a" style="left:644px;top:358px;line-height:19px;font-size:10.6px;color:#222;white-space:nowrap;">einfach zwischen Scheiben</div>
<svg style="left:627px;top:378px" width="14" height="14"><circle cx="7" cy="7" r="6" fill="#f7f7f7" stroke="#5a5a5a" stroke-width="1"/></svg>
<div class="a" style="left:644px;top:376px;line-height:19px;font-size:10.6px;color:#222;white-space:nowrap;">mehrfach zwischen Scheiben</div>
<svg style="left:627px;top:396px" width="14" height="14"><circle cx="7" cy="7" r="6" fill="#f7f7f7" stroke="#5a5a5a" stroke-width="1"/></svg>
<div class="a" style="left:644px;top:394px;line-height:19px;font-size:10.6px;color:#222;white-space:nowrap;">glasteilende Sprossen</div>
<div class="a" style="right:731px;top:447px;line-height:19px;font-size:10.6px;color:#a6a6a6;white-space:nowrap">links</div>
<div class="a" style="left:474px;top:447px;width:75px;height:19px;background:#fff;border-radius:3px 3px 1px 1px;"></div>
<div class="a" style="right:656px;top:447px;line-height:19px;font-size:10.6px;color:#555;white-space:nowrap">0,12</div>
<div class="a" style="left:545px;top:447px;width:4px;height:19px;background:#fff"></div>
<div class="a" style="left:553px;top:448px;line-height:19px;font-size:10.6px;color:#a6a6a6;white-space:nowrap;">m</div>
<div class="a" style="right:590px;top:447px;line-height:19px;font-size:10.6px;color:#a6a6a6;white-space:nowrap">rechts</div>
<div class="a" style="left:615px;top:447px;width:74px;height:19px;background:#fff;border-radius:3px 3px 1px 1px;"></div>
<svg style="left:672px;top:448px" width="16" height="16" viewBox="0 0 16 16"><rect width="16" height="16" rx="1" fill="#033a8e"/><g transform="rotate(-45 8 8)" fill="#fff"><polygon points="-0.5,8 2.3,5.9 2.3,10.1"/><rect x="3" y="5.8" width="9.3" height="4.4" rx="0.6"/><rect x="13.1" y="5.8" width="3" height="4.4" rx="1"/></g></svg>
<div class="a" style="right:533px;top:447px;line-height:19px;font-size:10.6px;color:#555;white-space:nowrap">0,12</div>
<div class="a" style="left:693px;top:448px;line-height:19px;font-size:10.6px;color:#a6a6a6;white-space:nowrap;">m</div>
<div class="a" style="right:731px;top:471px;line-height:19px;font-size:10.6px;color:#a6a6a6;white-space:nowrap">oben</div>
<div class="a" style="left:474px;top:471px;width:75px;height:19px;background:#fff;border-radius:3px 3px 1px 1px;"></div>
<svg style="left:532px;top:472px" width="16" height="16" viewBox="0 0 16 16"><rect width="16" height="16" rx="1" fill="#033a8e"/><g transform="rotate(-45 8 8)" fill="#fff"><polygon points="-0.5,8 2.3,5.9 2.3,10.1"/><rect x="3" y="5.8" width="9.3" height="4.4" rx="0.6"/><rect x="13.1" y="5.8" width="3" height="4.4" rx="1"/></g></svg>
<div class="a" style="right:673px;top:471px;line-height:19px;font-size:10.6px;color:#555;white-space:nowrap">0,12</div>
<div class="a" style="left:553px;top:472px;line-height:19px;font-size:10.6px;color:#a6a6a6;white-space:nowrap;">m</div>
<div class="a" style="right:590px;top:471px;line-height:19px;font-size:10.6px;color:#a6a6a6;white-space:nowrap">unten</div>
<div class="a" style="left:615px;top:471px;width:74px;height:19px;background:#fff;border-radius:3px 3px 1px 1px;"></div>
<svg style="left:672px;top:472px" width="16" height="16" viewBox="0 0 16 16"><rect width="16" height="16" rx="1" fill="#033a8e"/><g transform="rotate(-45 8 8)" fill="#fff"><polygon points="-0.5,8 2.3,5.9 2.3,10.1"/><rect x="3" y="5.8" width="9.3" height="4.4" rx="0.6"/><rect x="13.1" y="5.8" width="3" height="4.4" rx="1"/></g></svg>
<div class="a" style="right:533px;top:471px;line-height:19px;font-size:10.6px;color:#555;white-space:nowrap">0,12</div>
<div class="a" style="left:693px;top:472px;line-height:19px;font-size:10.6px;color:#a6a6a6;white-space:nowrap;">m</div>
<!-- tab control -->
<div class="a" style="left:850px;top:212px;width:346px;height:541px;background:#f9f9f9;border-right:1px solid #e0e0e0"></div>
<div class="a" style="left:850px;top:192px;width:50px;height:21px;background:#f9f9f9;border-radius:3px 3px 0 0"></div>
<div class="a" style="left:900px;top:194px;width:71px;height:18px;background:#f2f2f2;border-radius:3px 3px 0 0;border-top:1px solid #ececec"></div>
<div class="a" style="left:857px;top:195px;line-height:13px;font-size:10.6px;color:#1a1a1a">Aufbau</div>
<div class="a" style="left:904px;top:198px;line-height:13px;font-size:10.6px;color:#1a1a1a">Beschreibung</div>
<!-- preview box -->
<div class="a" style="left:854px;top:216px;width:1.5px;height:537px;background:#7a7a7a"></div>
<div class="a" style="left:854px;top:216px;width:339px;height:1.5px;background:#7a7a7a"></div>
<div class="a" style="left:855.5px;top:217.5px;width:337px;height:422px;background:#fff"></div>
<div class="a" style="left:855.5px;top:639.5px;width:337px;height:113px;background:#efefef"></div>
<svg style="left:0;top:0" width="1200" height="755">
<polygon points="866.4,320.3 928,338.8 928,406.4 866.4,387.9" fill="#ffea4c"/>
<polygon points="939,342.1 1000.5,360.6 1000.5,428.4 939,409.7" fill="#fff8c4"/>
<rect x="910.7" y="221.6" width="59.2" height="58.9" fill="#7a8d98" stroke="#111" stroke-width="1"/>
<rect x="921" y="281" width="38.6" height="38.6" fill="#7a5546" stroke="#111" stroke-width="1"/>
<polyline points="921,309 925.7,309 925.7,305 941,305 941,301.4 956,301.4 956,297.4 959.6,297.4" fill="none" stroke="#111" stroke-width="1.6"/>
<rect x="927.8" y="319.6" width="3.2" height="102.5" fill="#1a8ff0" stroke="#222" stroke-width="0.8"/>
<rect x="935.6" y="319.6" width="3.2" height="102.5" fill="#1a8ff0" stroke="#222" stroke-width="0.8"/>
<rect x="920.6" y="422.1" width="39.3" height="39.1" fill="#7a5546" stroke="#111" stroke-width="1"/>
<polyline points="921,437.9 925,437.9 925,442.2 941,442.2 941,446.3 957,446.3 957,450.2 959.9,450.2" fill="none" stroke="#111" stroke-width="1.6"/>
<rect x="900.5" y="461.5" width="99.5" height="9.5" fill="#7a8d98" stroke="#111" stroke-width="1"/>
<rect x="910.8" y="471" width="59" height="29.5" fill="#7a8d98" stroke="#111" stroke-width="1"/>
<line x1="942.5" y1="283.5" x2="1010" y2="283.5" stroke="#2a2aff" stroke-width="1.4"/>
<circle cx="942.5" cy="283.3" r="2" fill="#fff" stroke="#2a2aff" stroke-width="1.3"/>
<line x1="960" y1="371.5" x2="1010" y2="371.5" stroke="#2a2aff" stroke-width="1.4"/>
<circle cx="960" cy="371.3" r="2" fill="#fff" stroke="#2a2aff" stroke-width="1.3"/>
</svg>
<div class="a" style="left:990px;top:221px;font-size:19.5px;font-weight:bold;color:#000;line-height:23px;white-space:nowrap">Dachflächenfenster</div>
<div class="a" style="left:990px;top:245px;font-size:13.2px;color:#222;line-height:16px;white-space:nowrap">U-Wert = 3,709 W/(m²K)</div>
<div class="a" style="left:1015px;top:279px;font-size:10.6px;color:#222;line-height:13px;white-space:nowrap">33 % Rahmenanteil</div>
<div class="a" style="left:1015px;top:367px;font-size:11px;color:#222;line-height:13px;white-space:nowrap">g-Wert = 0,78</div>
<div class="a" style="left:991px;top:490px;font-size:10.9px;color:#222;line-height:13px;white-space:nowrap">(schematische Darstellung)</div>
<!-- bottom buttons -->
<div class="a" style="left:862px;top:611px;width:19px;height:19px;background:#fff;border:1px solid #dcdcdc;border-radius:4px;box-shadow:0 1px 1px #e4e4e4"></div>
<div class="a" style="left:889px;top:611px;width:19px;height:19px;background:#fff;border:1px solid #dcdcdc;border-radius:4px;box-shadow:0 1px 1px #e4e4e4"></div>
<div class="a" style="left:916px;top:611px;width:19px;height:19px;background:#fff;border:1px solid #dcdcdc;border-radius:4px;box-shadow:0 1px 1px #e4e4e4"></div>
<svg style="left:864px;top:613px" width="15" height="15" viewBox="0 0 15 15"><rect x="1" y="1" width="13" height="13" fill="#111"/><rect x="3" y="1.5" width="9" height="1.5" fill="#d42a2a"/><rect x="3" y="3" width="9" height="4.5" fill="#fff"/><rect x="5" y="9.5" width="5" height="4.5" fill="#fff"/><rect x="6.5" y="10.8" width="2" height="2" fill="#111"/></svg>
<svg style="left:891px;top:613px" width="15" height="15" viewBox="0 0 15 15"><rect x="1.5" y="2.5" width="9" height="11" fill="#fdf07a" stroke="#9acd32" stroke-width="0.8"/><rect x="4" y="1" width="4" height="2.5" fill="#fff" stroke="#888" stroke-width="0.7"/><rect x="5.5" y="6" width="8" height="8.5" rx="1.5" fill="#111"/><g stroke="#fff" stroke-width="0.8"><line x1="7" y1="8.5" x2="11" y2="8.5"/><line x1="7" y1="10.5" x2="11" y2="10.5"/></g></svg>
<svg style="left:918px;top:613px" width="15" height="15" viewBox="0 0 15 15"><rect x="1" y="8" width="13" height="5" fill="#aaa" stroke="#555" stroke-width="0.8"/><rect x="4" y="1" width="6" height="7" fill="#fff" stroke="#555" stroke-width="0.8"/><line x1="2" y1="11.5" x2="13" y2="11.5" stroke="#666" stroke-width="0.8"/><path d="M7,2 V6 M5.5,3.5 L7,2 L8.5,3.5" fill="none" stroke="#333" stroke-width="0.8"/></svg>

</body></html>
